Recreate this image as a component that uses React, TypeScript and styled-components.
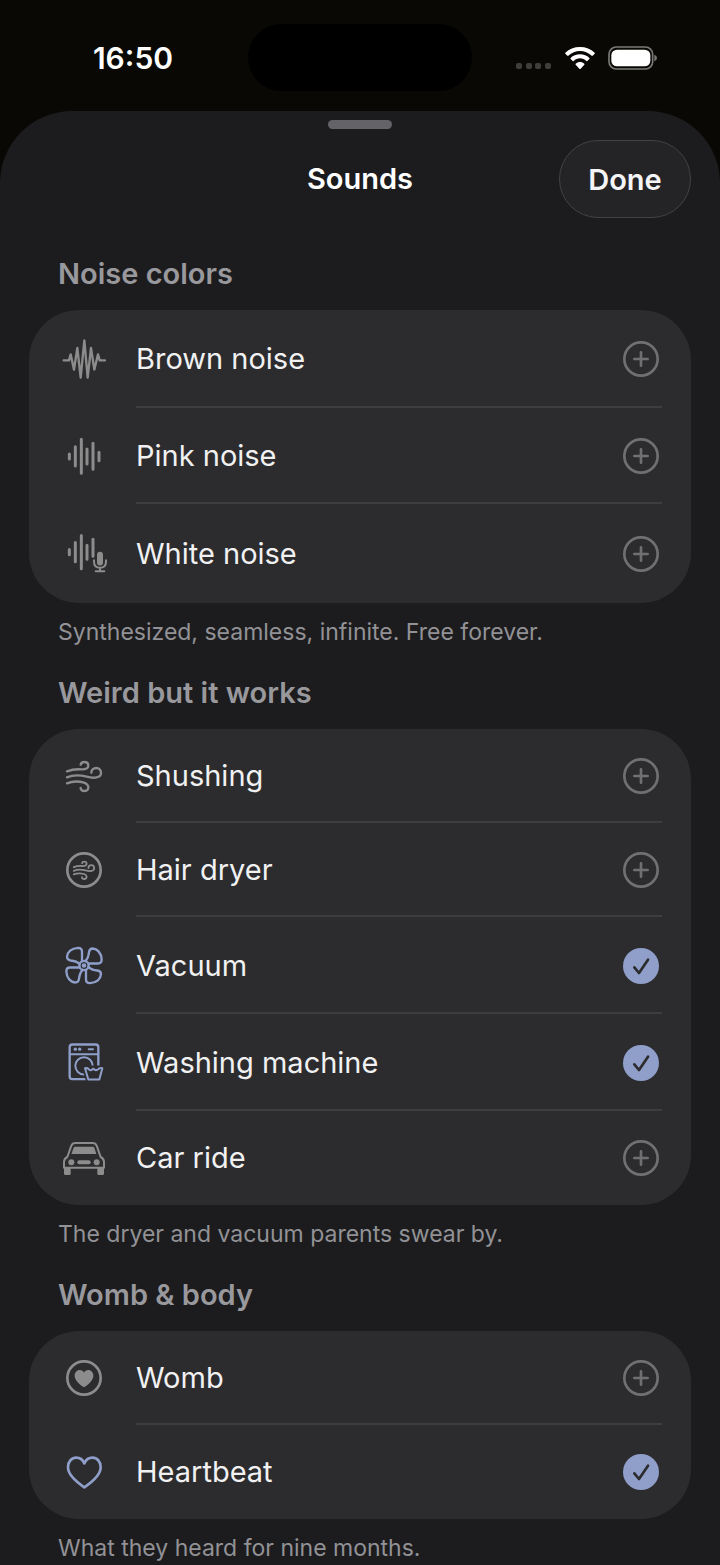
import React, { useState } from "react";
import styled, { createGlobalStyle } from "styled-components";

const GlobalStyle = createGlobalStyle`
  * { box-sizing: border-box; }
  body { margin: 0; background: #090805; }
  body, button, input { font-family: Inter, "Liberation Sans", sans-serif; }
`;

const Screen = styled.div`
  min-height: 100vh;
  display: flex;
  flex-direction: column;
  background: #090805;
  color: #f1f1f2;
`;

const StatusBar = styled.header`
  display: grid;
  grid-template-columns: 1fr 224px 1fr;
  align-items: center;
  padding: 24px 0 20px;
`;

const Time = styled.time`
  padding-left: 18px;
  text-align: center;
  color: #fff;
  font-size: 30px;
  font-weight: 600;
  line-height: 36px;
`;

const Island = styled.div`
  height: 67px;
  border-radius: 34px;
  background: #000;
`;

const StatusIcons = styled.div`
  display: flex;
  justify-content: flex-end;
  align-items: center;
  gap: 13px;
  padding-right: 62px;
`;

const Sheet = styled.main`
  flex: 1;
  display: flex;
  flex-direction: column;
  padding: 9px 29px 2px;
  border-radius: 72px 72px 0 0;
  background: #1c1c1e;
`;

const Grabber = styled.div`
  align-self: center;
  width: 64px;
  height: 9px;
  border-radius: 5px;
  background: #636368;
`;

const SheetHeader = styled.div`
  display: grid;
  grid-template-columns: 1fr auto 1fr;
  align-items: center;
  margin: 11px 0 36px;
`;

const Title = styled.h1`
  grid-column: 2;
  margin: 0;
  color: #fff;
  font-size: 29px;
  font-weight: 600;
  line-height: 40px;
`;

const DoneButton = styled.button`
  justify-self: end;
  width: 132px;
  height: 78px;
  border: 1px solid #434345;
  border-radius: 39px;
  background: #242426;
  color: #f5f5f7;
  font-size: 29px;
  font-weight: 600;
`;

const Sections = styled.div`
  display: flex;
  flex-direction: column;
  gap: 26px;
`;

const SectionTitle = styled.h2`
  margin: 0 29px 16px;
  color: #98989d;
  font-size: 29px;
  font-weight: 600;
  line-height: 40px;
`;

const Note = styled.p`
  margin: 14px 29px 0;
  color: #929296;
  font-size: 23px;
  line-height: 30px;
`;

const Card = styled.ul`
  margin: 0;
  padding: 0;
  list-style: none;
  border-radius: 50px;
  background: #2c2c2e;
`;

const RowBody = styled.span`
  flex: 1;
  align-self: stretch;
  display: flex;
  align-items: center;
  justify-content: space-between;
  padding-right: 3px;
  box-shadow: inset 0 -2px #3d3d3f;
`;

const Row = styled.label`
  display: flex;
  align-items: center;
  gap: 24px;
  padding: 0 29px 0 27px;
  cursor: pointer;

  li:last-child > & ${RowBody} {
    box-shadow: none;
  }
`;

const SoundIcon = styled.svg<{ $active: boolean }>`
  flex: none;
  width: 56px;
  margin: 28px 0;
  color: ${(p) => (p.$active ? "#8f9fca" : "#8c8c8d")};
  fill: none;
  stroke: currentColor;
  stroke-width: 7;
  stroke-linecap: round;
  stroke-linejoin: round;
`;

const SoundName = styled.span`
  font-size: 29px;
  line-height: 36px;
`;

const Toggle = styled.span`
  display: grid;
  width: 36px;
  height: 36px;

  > * {
    grid-area: 1 / 1;
  }
`;

const ToggleInput = styled.input`
  appearance: none;
  width: 36px;
  height: 36px;
  margin: 0;
  border-radius: 50%;
  cursor: pointer;

  &:checked {
    background: #8f9fca;
  }
`;

const ToggleMark = styled.svg<{ $active: boolean }>`
  width: 36px;
  height: 36px;
  pointer-events: none;
  fill: none;
  stroke: ${(p) => (p.$active ? "#2c2c2e" : "#707072")};
  stroke-width: 8;
  stroke-linecap: round;
  stroke-linejoin: round;
`;

const windPath = (
  <>
    <path d="M-51-14C-36-20-22-21-8-20C6-19 13-24 13-31C13-38 8-42 1-42C-5-42-9-39-10-34" />
    <path d="M-51 4C-30-5-12-3 8 2C30 8 51 6 51-9C51-18 45-24 37-24C28-24 22-18 22-10" />
    <path d="M-51 22C-36 16-14 16 0 20C8 23 13 28 13 34C13 41 8 45 2 45C-5 45-10 41-10 36" />
  </>
);

const petal =
  "M-6-13V-42C-6-50-10-53-18-53C-38-52-50-40-51-26C-51-18-46-16-40-15C-30-14-20-11-13-4";

type Glyph = { height: number; art: React.ReactNode };

/* Glyphs are drawn three units to the pixel, around the centre of their box. */
const glyphs: Record<string, Glyph> = {
  waveform: {
    height: 42,
    art: <path strokeWidth="7" d="M-61 4H-45L-40-14L-30 32L-20-33L-10 56L1-56L11 56L21-33L31 32L42-14L47 4H63" />,
  },
  bars: {
    height: 40,
    art: <path strokeWidth="9" d="M-44-6V9M-26-28V30M-8-50V52M9-21V24M27-38V40M45-11V14" />,
  },
  barsMic: {
    height: 43,
    art: (
      <>
        <path strokeWidth="9" d="M-44-12V4M-26-33V25M-8-54V46M9-25V17M27-43V8" />
        <rect x="39" y="-5" width="18" height="41" rx="9" fill="currentColor" stroke="none" />
        <path strokeWidth="6" d="M30 20V25C30 36 37 43 48 43C59 43 66 36 66 25V20M48 43V53M35 53H61" />
      </>
    ),
  },
  wind: { height: 38, art: windPath },
  dryer: {
    height: 38,
    art: (
      <>
        <circle r="50" strokeWidth="8" />
        <g transform="scale(.6)" strokeWidth="9">{windPath}</g>
      </>
    ),
  },
  fan: {
    height: 41,
    art: (
      <g strokeWidth="7">
        {[0, 90, 180, 270].map((turn) => (
          <path key={turn} d={petal} transform={`rotate(${turn})`} />
        ))}
        <circle r="14" />
        <circle r="7" fill="currentColor" stroke="none" />
      </g>
    ),
  },
  washer: {
    height: 41,
    art: (
      <>
        <rect x="-43" y="-54" width="86" height="104" rx="8" strokeWidth="7" />
        <path strokeWidth="6" d="M-42-25H42M14-40H27" />
        <circle cx="-26" cy="-40" r="5" fill="currentColor" stroke="none" />
        <circle cx="-13" cy="-40" r="5" fill="currentColor" stroke="none" />
        <circle cy="10" r="26" strokeWidth="6" />
        <path fill="#2c2c2e" stroke="#2c2c2e" strokeWidth="16" d="M3 17L13 51H46L55 17Z" />
        <path strokeWidth="6" d="M3 17L13 51H46L55 17C50 16 45 17 43 20Q37 26 30 20Q28 17 25 21Q19 26 14 20Q11 16 3 17Z" />
      </>
    ),
  },
  car: {
    height: 38,
    art: (
      <>
        <path strokeWidth="6" d="M-50-3L-39-34Q-36-45-26-45H26Q36-45 39-34L50-3Q60 2 60 12V29H-60V12Q-60 2-50-3Z" />
        <path fill="currentColor" stroke="none" d="M-27-34H27Q30-34 31-31L37-12H-38L-31-31Q-30-34-27-34ZM-60 28H-40V47Q-40 51-44 51H-56Q-60 51-60 47ZM40 28H60V47Q60 51 56 51H44Q40 51 40 47Z" />
        <circle cx="-38" cy="13" r="9" fill="currentColor" stroke="none" />
        <circle cx="38" cy="13" r="9" fill="currentColor" stroke="none" />
        <rect x="-20" y="7" width="40" height="12" rx="6" fill="currentColor" stroke="none" />
      </>
    ),
  },
  heartCircle: {
    height: 38,
    art: (
      <>
        <circle r="50" strokeWidth="8" />
        <path fill="currentColor" stroke="none" d="M0 28C-18 16-28 4-28-7C-28-17-21-24-13-24C-7-24-2-21 0-16C2-21 7-24 13-24C21-24 28-17 28-7C28 4 18 16 0 28Z" />
      </>
    ),
  },
  heart: {
    height: 38,
    art: <path strokeWidth="8" d="M1 46C-33 23-48 3-48-14C-48-32-37-43-23-43C-12-43-4-37 1-26C6-37 14-43 25-43C39-43 50-32 50-14C50 3 35 23 1 46Z" />,
  },
};

type Sound = { name: string; glyph: string };
type Group = { title: string; note: string; sounds: Sound[] };

const groups: Group[] = [
  {
    title: "Noise colors",
    note: "Synthesized, seamless, infinite. Free forever.",
    sounds: [
      { name: "Brown noise", glyph: "waveform" },
      { name: "Pink noise", glyph: "bars" },
      { name: "White noise", glyph: "barsMic" },
    ],
  },
  {
    title: "Weird but it works",
    note: "The dryer and vacuum parents swear by.",
    sounds: [
      { name: "Shushing", glyph: "wind" },
      { name: "Hair dryer", glyph: "dryer" },
      { name: "Vacuum", glyph: "fan" },
      { name: "Washing machine", glyph: "washer" },
      { name: "Car ride", glyph: "car" },
    ],
  },
  {
    title: "Womb & body",
    note: "What they heard for nine months.",
    sounds: [
      { name: "Womb", glyph: "heartCircle" },
      { name: "Heartbeat", glyph: "heart" },
    ],
  },
];

function SoundRow({ sound, active, onToggle }: { sound: Sound; active: boolean; onToggle: () => void }) {
  const { height, art } = glyphs[sound.glyph];
  return (
    <li>
      <Row>
        <SoundIcon $active={active} height={height} viewBox={`-84 ${-1.5 * height} 168 ${3 * height}`} aria-hidden="true">
          {art}
        </SoundIcon>
        <RowBody>
          <SoundName>{sound.name}</SoundName>
          <Toggle>
            <ToggleInput type="checkbox" checked={active} onChange={onToggle} />
            <ToggleMark $active={active} viewBox="-54 -54 108 108" aria-hidden="true">
              {active ? (
                <path d="M-20 4L-6 21L21-19" />
              ) : (
                <>
                  <circle r="50" />
                  <path d="M-20 0H20M0-20V20" />
                </>
              )}
            </ToggleMark>
          </Toggle>
        </RowBody>
      </Row>
    </li>
  );
}

export default function App() {
  const [playing, setPlaying] = useState<string[]>(["Vacuum", "Washing machine", "Heartbeat"]);
  const toggle = (name: string) =>
    setPlaying((now) => (now.includes(name) ? now.filter((n) => n !== name) : [...now, name]));

  return (
    <Screen>
      <GlobalStyle />
      <StatusBar>
        <Time>16:50</Time>
        <Island />
        <StatusIcons>
          <svg width="36" height="24" viewBox="0 0 36 24" fill="#3f3e3c" aria-hidden="true">
            {[0, 10, 19, 29].map((x) => (
              <rect key={x} x={x} y="17" width="6" height="6" rx="2" />
            ))}
          </svg>
          <svg width="30" height="24" viewBox="0 0 90 72" fill="#fff" aria-label="Wi-Fi" role="img">
            <path d="M45 3C62 3 78 9 89 20Q90 22 89 23L83 29Q82 30 80 29C70 20 58 15 45 15S20 20 10 29Q8 30 7 29L1 23Q0 22 1 20C12 9 28 3 45 3Z" />
            <path d="M45 25C56 25 66 29 73 36Q75 38 73 39L67 45Q65 46 64 45C59 40 52 37 45 37S31 40 26 45Q25 46 23 45L17 39Q15 38 17 36C24 29 34 25 45 25Z" />
            <path d="M45 48C50 48 54 50 58 53Q59 55 58 56L47 68Q45 70 43 68L32 56Q31 55 32 53C36 50 40 48 45 48Z" />
          </svg>
          <svg width="50" height="24" viewBox="0 0 150 72" aria-label="Battery" role="img">
            <rect x="3" y="3" width="131" height="66" rx="22" fill="none" stroke="#7a7977" strokeWidth="5" />
            <rect x="10" y="11" width="117" height="50" rx="17" fill="#fff" />
            <path d="M139 26Q147 29 147 36T139 46Z" fill="#7a7977" />
          </svg>
        </StatusIcons>
      </StatusBar>
      <Sheet>
        <Grabber />
        <SheetHeader>
          <Title>Sounds</Title>
          <DoneButton type="button">Done</DoneButton>
        </SheetHeader>
        <Sections>
          {groups.map((group) => (
            <section key={group.title}>
              <SectionTitle>{group.title}</SectionTitle>
              <Card>
                {group.sounds.map((sound) => (
                  <SoundRow
                    key={sound.name}
                    sound={sound}
                    active={playing.includes(sound.name)}
                    onToggle={() => toggle(sound.name)}
                  />
                ))}
              </Card>
              <Note>{group.note}</Note>
            </section>
          ))}
        </Sections>
      </Sheet>
    </Screen>
  );
}
